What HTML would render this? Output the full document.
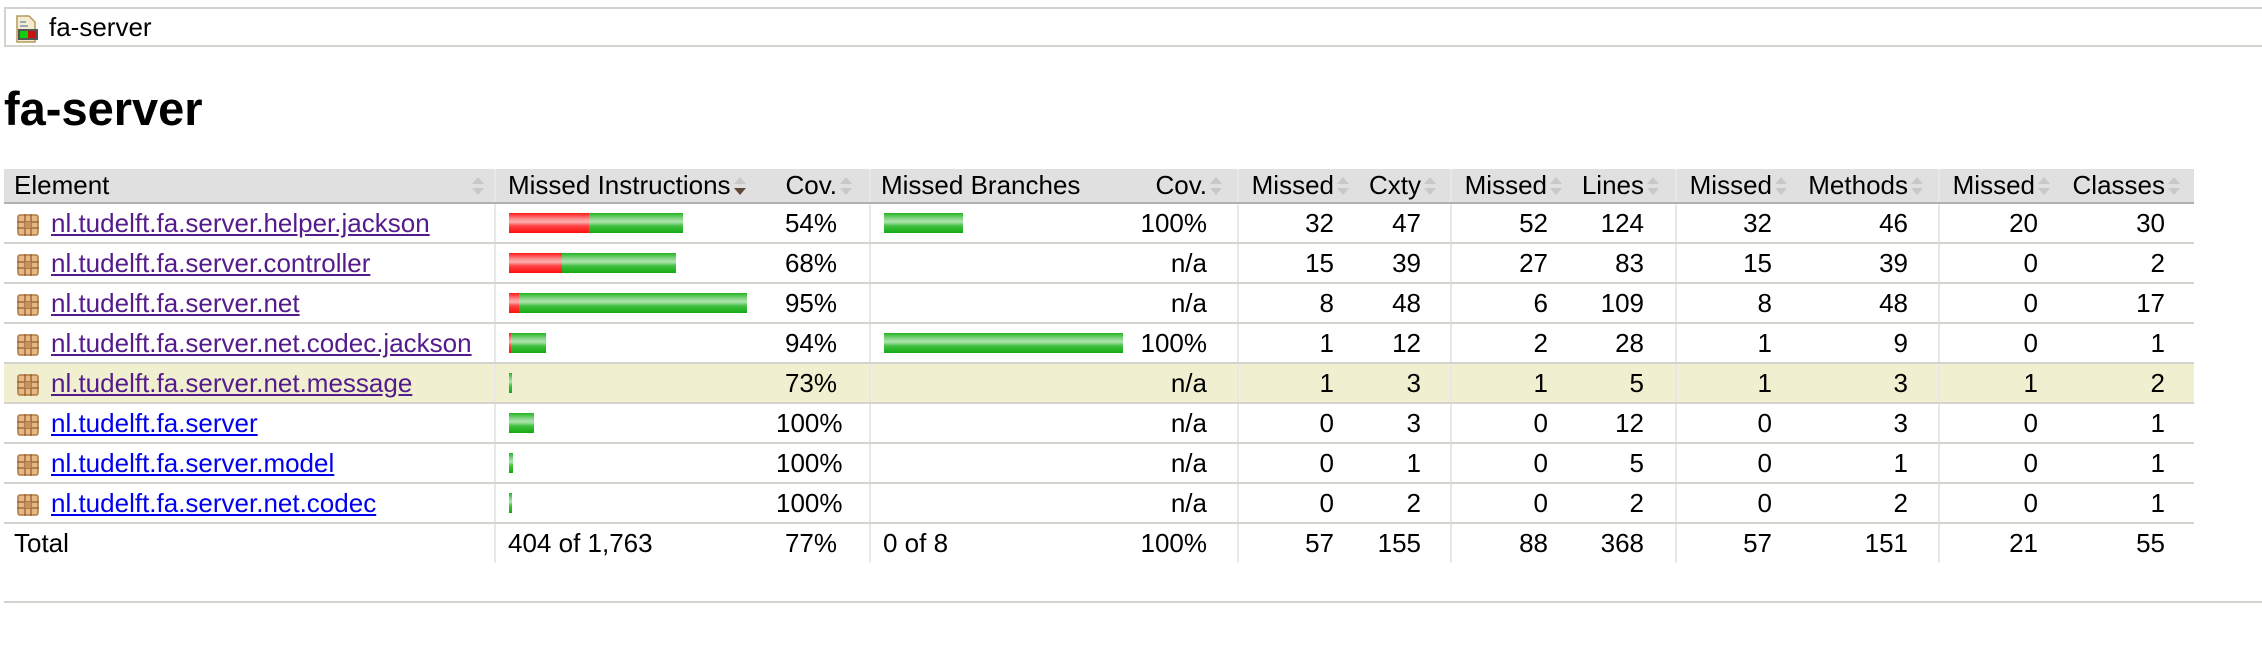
<!DOCTYPE html>
<html><head><meta charset="utf-8">
<style>
*{margin:0;padding:0;box-sizing:border-box}
body{width:2262px;height:658px;background:#fff;font-family:"Liberation Sans",Arial,sans-serif;font-size:26px;color:#000;position:relative;overflow:hidden}
.bc{position:absolute;left:4px;top:7px;width:2270px;height:40px;border:2px solid #d6d3ce;border-right:none}
.bc svg{position:absolute;left:9px;top:6px}
.bc span{position:absolute;left:43px;top:4px;font-size:26px;line-height:28px}
h1{position:absolute;left:4px;top:85px;font-size:47px;line-height:47px;font-weight:bold}
table{position:absolute;left:4px;top:169px;border-collapse:collapse;table-layout:fixed;width:2190px}
td{white-space:nowrap;height:40px;padding:0;vertical-align:middle;border-bottom:2px solid #d6d3ce}
thead td{background:#e0e0e0;height:34px;border-bottom:2px solid #b0b0b0}
tfoot td{border-bottom:none}
.g{border-left:2px solid #e8e8e8}
.r{text-align:right}
.hl td{background:#f0f0d0}
.el{padding-left:13px}
.el svg{vertical-align:-4px;margin-right:12px}
a{text-decoration:underline}
.v{color:#551a8b}.b{color:#0000ee}
.bar{padding-left:13px;font-size:0}
.bar i{display:inline-block;height:20px;vertical-align:middle}
.rd{background:linear-gradient(#ff1616 0%,#ff8f8f 30%,#ffb0b0 45%,#ff4040 65%,#ff1010 100%)}
.gr{background:linear-gradient(#22b522 0%,#8fd88f 30%,#aee4ae 45%,#40c040 65%,#14a814 100%)}
.s{display:inline-block;width:16px;height:24px;margin-left:1px;vertical-align:-4px}
</style></head><body>
<div class="bc"><svg width="24" height="28" viewBox="0 0 24 28"><path d="M2 1h12l6 6v20H2z" fill="#f3ecd0" stroke="#b89a5a" stroke-width="1.5"/><rect x="5" y="6" width="6" height="2" fill="#9ab"/><rect x="5" y="10" width="8" height="2" fill="#9ab"/><rect x="3" y="14" width="20" height="11" fill="#555"/><rect x="5" y="16" width="8" height="7" fill="#1c1"/><rect x="13" y="16" width="8" height="7" fill="#c11"/></svg><span>fa-server</span></div>
<h1>fa-server</h1>
<svg width="0" height="0" style="position:absolute"><defs>
<g id="pk"><rect x="1" y="1" width="20" height="20" rx="2" fill="#e8b884" stroke="#b07840" stroke-width="1.5"/><path d="M8 0v22M14 0v22M0 8h22M0 14h22" stroke="#8a5a30" stroke-width="1.5" opacity=".8"/><rect x="8" y="8" width="6" height="6" fill="#c8905a"/></g>
<g id="so"><path d="M8 3l6 7H2z" fill="#c8c8c8"/><path d="M8 21l6-7H2z" fill="#c8c8c8"/></g>
<g id="sd"><path d="M8 3l6 7H2z" fill="#c8c8c8"/><path d="M8 21l6-7H2z" fill="#604838"/></g>
</defs></svg>
<table>
<colgroup><col style="width:491px"><col style="width:281px"><col style="width:94px"><col style="width:270px"><col style="width:98px"><col style="width:114px"><col style="width:99px"><col style="width:113px"><col style="width:112px"><col style="width:114px"><col style="width:149px"><col style="width:113px"><col style="width:142px"></colgroup>
<thead><tr>
<td style="padding-left:10px;position:relative">Element<svg class="s" style="position:absolute;left:465px;top:5px" viewBox="0 0 16 24"><use href="#so"/></svg></td>
<td class="g" style="padding-left:12px">Missed Instructions<svg class="s" viewBox="0 0 16 24"><use href="#sd"/></svg></td>
<td class="r" style="padding-right:15px">Cov.<svg class="s" viewBox="0 0 16 24"><use href="#so"/></svg></td>
<td class="g" style="padding-left:10px">Missed Branches</td>
<td class="r" style="padding-right:13px">Cov.<svg class="s" viewBox="0 0 16 24"><use href="#so"/></svg></td>
<td class="g r" style="padding-right:1px">Missed<svg class="s" viewBox="0 0 16 24"><use href="#so"/></svg></td>
<td class="r" style="padding-right:12px">Cxty<svg class="s" viewBox="0 0 16 24"><use href="#so"/></svg></td>
<td class="g r" style="padding-right:0px">Missed<svg class="s" viewBox="0 0 16 24"><use href="#so"/></svg></td>
<td class="r" style="padding-right:14px">Lines<svg class="s" viewBox="0 0 16 24"><use href="#so"/></svg></td>
<td class="g r" style="padding-right:1px">Missed<svg class="s" viewBox="0 0 16 24"><use href="#so"/></svg></td>
<td class="r" style="padding-right:13px">Methods<svg class="s" viewBox="0 0 16 24"><use href="#so"/></svg></td>
<td class="g r" style="padding-right:0px">Missed<svg class="s" viewBox="0 0 16 24"><use href="#so"/></svg></td>
<td class="r" style="padding-right:12px">Classes<svg class="s" viewBox="0 0 16 24"><use href="#so"/></svg></td>
</tr></thead>
<tbody>
<tr><td class="el"><svg width="22" height="22"><use href="#pk"/></svg><a class="v">nl.tudelft.fa.server.helper.jackson</a></td><td class="g bar"><i class="rd" style="width:80px"></i><i class="gr" style="width:94px"></i></td><td class="r" style="padding-right:32px">54%</td><td class="g bar"><i class="gr" style="width:79px"></i></td><td class="r" style="padding-right:30px">100%</td><td class="g r" style="padding-right:18px">32</td><td class="r" style="padding-right:29px">47</td><td class="g r" style="padding-right:16px">52</td><td class="r" style="padding-right:31px">124</td><td class="g r" style="padding-right:18px">32</td><td class="r" style="padding-right:30px">46</td><td class="g r" style="padding-right:14px">20</td><td class="r" style="padding-right:29px">30</td></tr>
<tr><td class="el"><svg width="22" height="22"><use href="#pk"/></svg><a class="v">nl.tudelft.fa.server.controller</a></td><td class="g bar"><i class="rd" style="width:53px"></i><i class="gr" style="width:114px"></i></td><td class="r" style="padding-right:32px">68%</td><td class="g"></td><td class="r" style="padding-right:30px">n/a</td><td class="g r" style="padding-right:18px">15</td><td class="r" style="padding-right:29px">39</td><td class="g r" style="padding-right:16px">27</td><td class="r" style="padding-right:31px">83</td><td class="g r" style="padding-right:18px">15</td><td class="r" style="padding-right:30px">39</td><td class="g r" style="padding-right:14px">0</td><td class="r" style="padding-right:29px">2</td></tr>
<tr><td class="el"><svg width="22" height="22"><use href="#pk"/></svg><a class="v">nl.tudelft.fa.server.net</a></td><td class="g bar"><i class="rd" style="width:10px"></i><i class="gr" style="width:228px"></i></td><td class="r" style="padding-right:32px">95%</td><td class="g"></td><td class="r" style="padding-right:30px">n/a</td><td class="g r" style="padding-right:18px">8</td><td class="r" style="padding-right:29px">48</td><td class="g r" style="padding-right:16px">6</td><td class="r" style="padding-right:31px">109</td><td class="g r" style="padding-right:18px">8</td><td class="r" style="padding-right:30px">48</td><td class="g r" style="padding-right:14px">0</td><td class="r" style="padding-right:29px">17</td></tr>
<tr><td class="el"><svg width="22" height="22"><use href="#pk"/></svg><a class="v">nl.tudelft.fa.server.net.codec.jackson</a></td><td class="g bar"><i class="rd" style="width:2px"></i><i class="gr" style="width:35px"></i></td><td class="r" style="padding-right:32px">94%</td><td class="g bar"><i class="gr" style="width:239px"></i></td><td class="r" style="padding-right:30px">100%</td><td class="g r" style="padding-right:18px">1</td><td class="r" style="padding-right:29px">12</td><td class="g r" style="padding-right:16px">2</td><td class="r" style="padding-right:31px">28</td><td class="g r" style="padding-right:18px">1</td><td class="r" style="padding-right:30px">9</td><td class="g r" style="padding-right:14px">0</td><td class="r" style="padding-right:29px">1</td></tr>
<tr class="hl"><td class="el"><svg width="22" height="22"><use href="#pk"/></svg><a class="v">nl.tudelft.fa.server.net.message</a></td><td class="g bar"><i class="gr" style="width:3px"></i></td><td class="r" style="padding-right:32px">73%</td><td class="g"></td><td class="r" style="padding-right:30px">n/a</td><td class="g r" style="padding-right:18px">1</td><td class="r" style="padding-right:29px">3</td><td class="g r" style="padding-right:16px">1</td><td class="r" style="padding-right:31px">5</td><td class="g r" style="padding-right:18px">1</td><td class="r" style="padding-right:30px">3</td><td class="g r" style="padding-right:14px">1</td><td class="r" style="padding-right:29px">2</td></tr>
<tr><td class="el"><svg width="22" height="22"><use href="#pk"/></svg><a class="b">nl.tudelft.fa.server</a></td><td class="g bar"><i class="gr" style="width:25px"></i></td><td class="r" style="padding-right:32px">100%</td><td class="g"></td><td class="r" style="padding-right:30px">n/a</td><td class="g r" style="padding-right:18px">0</td><td class="r" style="padding-right:29px">3</td><td class="g r" style="padding-right:16px">0</td><td class="r" style="padding-right:31px">12</td><td class="g r" style="padding-right:18px">0</td><td class="r" style="padding-right:30px">3</td><td class="g r" style="padding-right:14px">0</td><td class="r" style="padding-right:29px">1</td></tr>
<tr><td class="el"><svg width="22" height="22"><use href="#pk"/></svg><a class="b">nl.tudelft.fa.server.model</a></td><td class="g bar"><i class="gr" style="width:4px"></i></td><td class="r" style="padding-right:32px">100%</td><td class="g"></td><td class="r" style="padding-right:30px">n/a</td><td class="g r" style="padding-right:18px">0</td><td class="r" style="padding-right:29px">1</td><td class="g r" style="padding-right:16px">0</td><td class="r" style="padding-right:31px">5</td><td class="g r" style="padding-right:18px">0</td><td class="r" style="padding-right:30px">1</td><td class="g r" style="padding-right:14px">0</td><td class="r" style="padding-right:29px">1</td></tr>
<tr><td class="el"><svg width="22" height="22"><use href="#pk"/></svg><a class="b">nl.tudelft.fa.server.net.codec</a></td><td class="g bar"><i class="gr" style="width:3px"></i></td><td class="r" style="padding-right:32px">100%</td><td class="g"></td><td class="r" style="padding-right:30px">n/a</td><td class="g r" style="padding-right:18px">0</td><td class="r" style="padding-right:29px">2</td><td class="g r" style="padding-right:16px">0</td><td class="r" style="padding-right:31px">2</td><td class="g r" style="padding-right:18px">0</td><td class="r" style="padding-right:30px">2</td><td class="g r" style="padding-right:14px">0</td><td class="r" style="padding-right:29px">1</td></tr>
</tbody>
<tfoot><tr><td style="padding-left:10px">Total</td><td class="g" style="padding-left:12px">404 of 1,763</td><td class="r" style="padding-right:32px">77%</td><td class="g" style="padding-left:12px">0 of 8</td><td class="r" style="padding-right:30px">100%</td><td class="g r" style="padding-right:18px">57</td><td class="r" style="padding-right:29px">155</td><td class="g r" style="padding-right:16px">88</td><td class="r" style="padding-right:31px">368</td><td class="g r" style="padding-right:18px">57</td><td class="r" style="padding-right:30px">151</td><td class="g r" style="padding-right:14px">21</td><td class="r" style="padding-right:29px">55</td></tr></tfoot>
</table>
<div style="position:absolute;left:4px;top:601px;width:2262px;height:2px;background:#d6d3ce"></div>
</body></html>
